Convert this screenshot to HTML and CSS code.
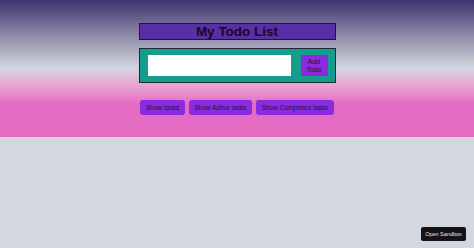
FILE: index.html
```html
<!DOCTYPE html>
<html>
<head>
<meta charset="utf-8">
<link rel="stylesheet" href="styles.css">
</head>
<body>
<div class="hero">
  <div class="container">
    <h1 class="title">My Todo List</h1>
    <form class="form">
      <input class="input" type="text">
      <button class="add" type="button">Add<br>Todo</button>
    </form>
    <div class="filters">
      <button class="filter" type="button">Show tasks</button>
      <button class="filter" type="button">Show Active tasks</button>
      <button class="filter" type="button">Show Completed tasks</button>
    </div>
  </div>
</div>
<button class="sandbox" type="button">Open Sandbox</button>
</body>
</html>
```
FILE: styles.css
```css
html, body {
  margin: 0;
  padding: 0;
}
body {
  background: #d3d8df;
  font-family: "Liberation Sans", Arial, sans-serif;
  width: 474px;
  height: 248px;
  overflow: hidden;
  position: relative;
}
.hero {
  height: 137px;
  background: linear-gradient(to bottom, #3d336f 0%, #8f8aa8 26%, #d3d6df 50%, #e8a6d3 62%, #e56cc4 76%, #e46bc2 100%);
  padding-top: 23px;
  box-sizing: border-box;
}
.container {
  width: 197px;
  margin: 0 auto;
  display: flex;
  flex-direction: column;
  align-items: center;
}
.title {
  margin: 0;
  width: 100%;
  box-sizing: border-box;
  height: 17px;
  border: 1px solid #1e1838;
  background: #5a2fa6;
  color: #120c20;
  font-size: 13.5px;
  font-weight: bold;
  line-height: 15px;
  text-align: center;
}
.form {
  margin: 8px 0 0 0;
  width: 100%;
  box-sizing: border-box;
  height: 35px;
  border: 1px solid #1d2a30;
  background: #159c8c;
  display: flex;
  align-items: center;
  padding: 0 7px 0 8px;
  gap: 10px;
}
.input {
  width: 143px;
  height: 21px;
  box-sizing: border-box;
  border: none;
  background: #ffffff;
  margin: 0;
  padding: 0;
}
.add {
  width: 27px;
  height: 21px;
  border: none;
  margin: 0;
  padding: 0;
  background: #8a2be2;
  color: #1d1430;
  font-family: "Liberation Sans", Arial, sans-serif;
  font-size: 7px;
  line-height: 8px;
  border-radius: 1px;
}
.filters {
  margin-top: 17px;
  display: flex;
  gap: 4px;
}
.filter {
  height: 15px;
  border: none;
  margin: 0;
  padding: 0 5.5px;
  background: #8a2be2;
  color: #1d1430;
  border-radius: 3px;
  font-family: "Liberation Sans", Arial, sans-serif;
  font-size: 6.5px;
  line-height: 15px;
  white-space: nowrap;
}
.sandbox {
  position: absolute;
  right: 8px;
  bottom: 7px;
  height: 14px;
  width: 45px;
  padding: 0;
  border: none;
  border-radius: 2px;
  background: #141318;
  color: #e8e8ec;
  font-family: "Liberation Sans", Arial, sans-serif;
  font-size: 5.5px;
  line-height: 14px;
}
```
